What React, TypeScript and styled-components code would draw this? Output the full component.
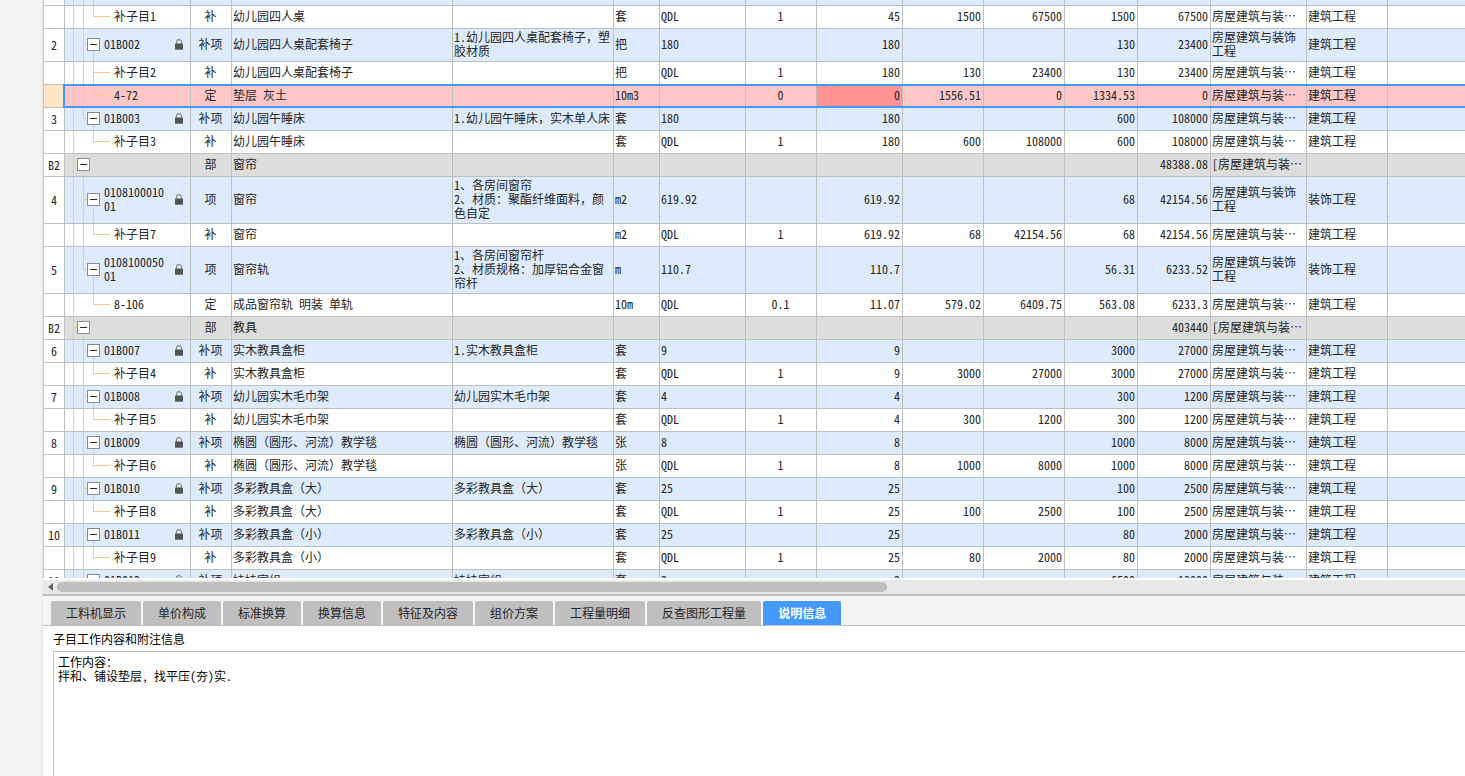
import React from 'react';
import styled, { createGlobalStyle } from 'styled-components';

const LINE = '#bfbfbf';
const GUIDE = '#ffc87c';

const GlobalStyle = createGlobalStyle`
  * { box-sizing: border-box; }
  html, body, #root { height: 100%; }
  body {
    margin: 0;
    background: #fff;
    color: #262626;
    font: 12px/14px "Noto Sans Mono CJK SC", "Liberation Mono", "Noto Sans CJK SC", monospace;
    overflow: hidden;
  }
`;

const Page = styled.div`
  display: flex;
  height: 100%;
  min-height: 0;
`;

const Rail = styled.aside`
  flex: 0 0 43px;
  background: #f4f4f4;
  border-right: 2px solid #ececec;
`;

const Workspace = styled.main`
  flex: 1;
  min-width: 0;
  display: flex;
  flex-direction: column;
`;

const GridPane = styled.section`
  flex: 1;
  min-height: 0;
  overflow: hidden;
  border-left: 1px solid ${LINE};
`;

const Table = styled.table`
  width: 100%;
  table-layout: fixed;
  border-collapse: separate;
  border-spacing: 0;
`;

const Col = styled.col<{ $w?: number }>`
  width: ${(p) => (p.$w ? p.$w + 'px' : 'auto')};
`;

type Kind = 'item' | 'leaf' | 'part' | 'selected';
const fills: Record<Kind, string> = { item: '#deebff', leaf: '#ffffff', part: '#dddddd', selected: '#fec6c6' };

const Row = styled.tr<{ $kind: Kind; $short?: boolean }>`
  height: ${(p) => (p.$short ? 6 : 23)}px;
  background: ${(p) => fills[p.$kind]};
  position: ${(p) => (p.$kind === 'selected' ? 'relative' : 'static')};
`;

const SelectionFrame = styled.span`
  position: absolute;
  inset: -1px -2px 0 19px;
  border: 2px solid #4499ff;
  pointer-events: none;
`;

const Cell = styled.td<{ $align?: string; $hot?: boolean }>`
  padding: 1px 2px 3px 1px;
  border-right: 1px solid ${LINE};
  border-bottom: 1px solid ${LINE};
  text-align: ${(p) => p.$align || 'left'};
  vertical-align: middle;
  white-space: pre-line;
  ${(p) => p.$hot && 'background: #ff9393;'}
  &:last-child { border-right: 0; }
`;

const ShortCell = styled(Cell)`
  padding: 0;
`;

const NumberCell = styled.th<{ $active?: boolean }>`
  padding: 0;
  font-weight: normal;
  text-align: center;
  background: ${(p) => (p.$active ? '#ffe6c7' : '#fff')};
  border-right: 1px solid ${LINE};
  border-bottom: 1px solid ${LINE};
`;

const TreeCell = styled(Cell)<{ $guides: string; $short?: boolean }>`
  padding: ${(p) => (p.$short ? '0' : '0 7px 2px 0')};
  background-image: linear-gradient(${GUIDE}, ${GUIDE}), linear-gradient(${GUIDE}, ${GUIDE}),
    linear-gradient(${GUIDE}, ${GUIDE}), linear-gradient(${GUIDE}, ${GUIDE});
  background-repeat: no-repeat;
  ${(p) => p.$guides}
`;

const TreeLine = styled.div<{ $indent: number }>`
  display: flex;
  align-items: center;
  padding-left: ${(p) => p.$indent}px;
`;

const Code = styled.span`
  flex: 1;
  margin-left: 5px;
  padding-right: 8px;
  overflow-wrap: anywhere;
`;

const Toggle = styled.button`
  flex: none;
  width: 13px;
  height: 13px;
  padding: 0 2px;
  border: 1px solid #8c8c8c;
  background: #fff;
  display: flex;
  align-items: center;
  &::before {
    content: '';
    width: 100%;
    height: 1px;
    background: #262626;
  }
  & + ${Code} {
    margin-left: 4px;
  }
`;

const LockIcon = () => (
  <svg width="8" height="11" viewBox="0 0 8 11" aria-hidden="true">
    <path d="M1.5 5V3.2a2.5 2.5 0 0 1 5 0V5" fill="none" stroke="#8c8c8c" strokeWidth="1.2" />
    <rect x="0" y="4.5" width="8" height="6.2" rx="0.6" fill="#555" />
  </svg>
);

const ScrollTrack = styled.div`
  flex: none;
  display: flex;
  align-items: center;
  gap: 4px;
  height: 18px;
  padding-left: 5px;
  border-top: 2px solid #fff;
  border-bottom: 2px solid ${LINE};
  background: #e8e8e8;
`;

const ScrollThumb = styled.div`
  width: calc(59% - 6px);
  height: 10px;
  border-radius: 5px;
  background: ${LINE};
`;

const Tabs = styled.nav`
  flex: none;
  display: flex;
  align-items: flex-end;
  gap: 2px;
  height: 30px;
  padding-left: 8px;
  background: #f4f4f4;
  border-bottom: 1px solid ${LINE};
`;

const Tab = styled.button<{ $active?: boolean }>`
  height: 24px;
  padding: 0 15px;
  border: 0;
  border-radius: 2px 2px 0 0;
  font: ${(p) => (p.$active ? 'bold' : 'normal')} 12px/24px "Noto Sans CJK SC", sans-serif;
  color: ${(p) => (p.$active ? '#fff' : '#262626')};
  background: ${(p) => (p.$active ? '#4499ff' : LINE)};
`;

const InfoPane = styled.section`
  flex: 0 0 150px;
  display: flex;
  flex-direction: column;
  color: #000;
`;

const InfoLabel = styled.label`
  padding: 6px 10px 5px;
`;

const InfoText = styled.textarea`
  flex: 1;
  margin-left: 10px;
  padding: 3px 4px;
  border: 1px solid ${LINE};
  border-width: 1px 0 0 1px;
  outline: 0;
  resize: none;
  font: inherit;
  color: inherit;
`;

const widths = [21, 126, 41, 221, 161, 46, 86, 71, 86, 81, 81, 73, 73, 96, 81];
const aligns = ['center', 'left', 'left', 'left', 'left', 'center', 'right', 'right', 'right', 'right', 'right', 'left', 'left'];

/* Branch shapes: how far each vertical guide runs within the row. */
type Branch = 'part' | 'item' | 'itemLast' | 'leaf' | 'leafMid' | 'leafOfLast' | 'through';

function guides(b: Branch): string {
  const full = (x: number) => [`${x}px 0`, '1px 100%'];
  const upper = (x: number) => [`${x}px 0`, '1px 50%'];
  const lower = (x: number) => [`${x}px 100%`, '1px 50%'];
  const across = (x: number, w: number) => [`${x}px calc(50% - 1px)`, `${w}px 1px`];
  const shapes: Record<Branch, string[][]> = {
    part: [full(8), lower(18), across(8, 6)],
    item: [full(8), full(18), lower(28), across(18, 6)],
    itemLast: [full(8), upper(18), lower(28), across(18, 6)],
    leaf: [full(8), full(18), upper(28), across(28, 17)],
    leafMid: [full(8), full(18), full(28), across(28, 17)],
    leafOfLast: [full(8), upper(28), across(28, 17)],
    through: [full(8), full(18), full(28)],
  };
  const s = shapes[b];
  while (s.length < 4) s.push(['0 0', '0 0']);
  return `background-position: ${s.map((g) => g[0]).join(', ')}; background-size: ${s.map((g) => g[1]).join(', ')};`;
}

interface Entry {
  no: string;
  kind: Kind;
  branch: Branch;
  code: string;
  cells: string[];
}

const S = '房屋建筑与装…';
const L = '房屋建筑与装饰\n工程';
const J = '建筑工程';
const row = (no: string, kind: Kind, branch: Branch, code: string, ...cells: string[]): Entry => ({ no, kind, branch, code, cells });

const rows: Entry[] = [
  row('', 'leaf', 'leaf', '补子目1', '补', '幼儿园四人桌', '', '套', 'QDL', '1', '45', '1500', '67500', '1500', '67500', S, J),
  row('2', 'item', 'item', '01B002', '补项', '幼儿园四人桌配套椅子', '1.幼儿园四人桌配套椅子，塑\n胶材质', '把', '180', '', '180', '', '', '130', '23400', L, J),
  row('', 'leaf', 'leafMid', '补子目2', '补', '幼儿园四人桌配套椅子', '', '把', 'QDL', '1', '180', '130', '23400', '130', '23400', S, J),
  row('', 'selected', 'leaf', '4-72', '定', '垫层 灰土', '', '10m3', '', '0', '0', '1556.51', '0', '1334.53', '0', S, J),
  row('3', 'item', 'itemLast', '01B003', '补项', '幼儿园午睡床', '1.幼儿园午睡床，实木单人床', '套', '180', '', '180', '', '', '600', '108000', S, J),
  row('', 'leaf', 'leafOfLast', '补子目3', '补', '幼儿园午睡床', '', '套', 'QDL', '1', '180', '600', '108000', '600', '108000', S, J),
  row('B2', 'part', 'part', '', '部', '窗帘', '', '', '', '', '', '', '', '', '48388.08', '[' + S, ''),
  row('4', 'item', 'item', '010810001001', '项', '窗帘', '1、各房间窗帘\n2、材质：聚酯纤维面料，颜\n色自定', 'm2', '619.92', '', '619.92', '', '', '68', '42154.56', L, '装饰工程'),
  row('', 'leaf', 'leaf', '补子目7', '补', '窗帘', '', 'm2', 'QDL', '1', '619.92', '68', '42154.56', '68', '42154.56', S, J),
  row('5', 'item', 'itemLast', '010810005001', '项', '窗帘轨', '1、各房间窗帘杆\n2、材质规格：加厚铝合金窗\n帘杆', 'm', '110.7', '', '110.7', '', '', '56.31', '6233.52', L, '装饰工程'),
  row('', 'leaf', 'leafOfLast', '8-106', '定', '成品窗帘轨 明装 单轨', '', '10m', 'QDL', '0.1', '11.07', '579.02', '6409.75', '563.08', '6233.3', S, J),
  row('B2', 'part', 'part', '', '部', '教具', '', '', '', '', '', '', '', '', '403440', '[' + S, ''),
  row('6', 'item', 'item', '01B007', '补项', '实木教具盒柜', '1.实木教具盒柜', '套', '9', '', '9', '', '', '3000', '27000', S, J),
  row('', 'leaf', 'leaf', '补子目4', '补', '实木教具盒柜', '', '套', 'QDL', '1', '9', '3000', '27000', '3000', '27000', S, J),
  row('7', 'item', 'item', '01B008', '补项', '幼儿园实木毛巾架', '幼儿园实木毛巾架', '套', '4', '', '4', '', '', '300', '1200', S, J),
  row('', 'leaf', 'leaf', '补子目5', '补', '幼儿园实木毛巾架', '', '套', 'QDL', '1', '4', '300', '1200', '300', '1200', S, J),
  row('8', 'item', 'item', '01B009', '补项', '椭圆（圆形、河流）教学毯', '椭圆（圆形、河流）教学毯', '张', '8', '', '8', '', '', '1000', '8000', S, J),
  row('', 'leaf', 'leaf', '补子目6', '补', '椭圆（圆形、河流）教学毯', '', '张', 'QDL', '1', '8', '1000', '8000', '1000', '8000', S, J),
  row('9', 'item', 'item', '01B010', '补项', '多彩教具盒（大）', '多彩教具盒（大）', '套', '25', '', '25', '', '', '100', '2500', S, J),
  row('', 'leaf', 'leaf', '补子目8', '补', '多彩教具盒（大）', '', '套', 'QDL', '1', '25', '100', '2500', '100', '2500', S, J),
  row('10', 'item', 'item', '01B011', '补项', '多彩教具盒（小）', '多彩教具盒（小）', '套', '25', '', '25', '', '', '80', '2000', S, J),
  row('', 'leaf', 'leaf', '补子目9', '补', '多彩教具盒（小）', '', '套', 'QDL', '1', '25', '80', '2000', '80', '2000', S, J),
  row('11', 'item', 'item', '01B012', '补项', '娃娃家组', '娃娃家组', '套', '2', '', '2', '', '', '6500', '13000', S, J),
];

const tabs = ['工料机显示', '单价构成', '标准换算', '换算信息', '特征及内容', '组价方案', '工程量明细', '反查图形工程量', '说明信息'];

function BillRow({ r }: { r: Entry }) {
  const branch = r.kind === 'item' || r.kind === 'part';
  const indent = r.kind === 'part' ? 12 : branch ? 22 : 44;
  const selected = r.kind === 'selected';
  return (
    <Row $kind={r.kind}>
      <NumberCell scope="row" $active={selected}>
        {r.no}
        {selected && <SelectionFrame />}
      </NumberCell>
      <TreeCell $guides={guides(r.branch)}>
        <TreeLine $indent={indent}>
          {branch && <Toggle type="button" aria-label="折叠" />}
          <Code>{r.code}</Code>
          {r.kind === 'item' && <LockIcon />}
        </TreeLine>
      </TreeCell>
      {r.cells.map((c, i) => (
        <Cell key={i} $align={aligns[i]} $hot={selected && i === 6}>{c}</Cell>
      ))}
      <Cell />
    </Row>
  );
}

export default function App() {
  return (
    <Page lang="zh-CN">
      <GlobalStyle />
      <Rail />
      <Workspace>
        <GridPane>
          <Table>
            <colgroup>
              {widths.map((w, i) => <Col key={i} $w={w} />)}
              <Col />
            </colgroup>
            <tbody>
              <Row $kind="item" $short>
                <NumberCell />
                <TreeCell $short $guides={guides('through')} />
                {widths.slice(1).map((_, i) => <ShortCell key={i} />)}
              </Row>
              {rows.map((r, i) => <BillRow key={i} r={r} />)}
            </tbody>
          </Table>
        </GridPane>
        <ScrollTrack>
          <svg width="5" height="8" viewBox="0 0 5 8" aria-hidden="true">
            <path d="M5 0v8L0 4z" fill="#666" />
          </svg>
          <ScrollThumb />
        </ScrollTrack>
        <Tabs>
          {tabs.map((t, i) => <Tab key={t} type="button" $active={i === tabs.length - 1}>{t}</Tab>)}
        </Tabs>
        <InfoPane>
          <InfoLabel htmlFor="work-info">子目工作内容和附注信息</InfoLabel>
          <InfoText id="work-info" readOnly value={'工作内容：\n拌和、铺设垫层, 找平压(夯)实.'} />
        </InfoPane>
      </Workspace>
    </Page>
  );
}
